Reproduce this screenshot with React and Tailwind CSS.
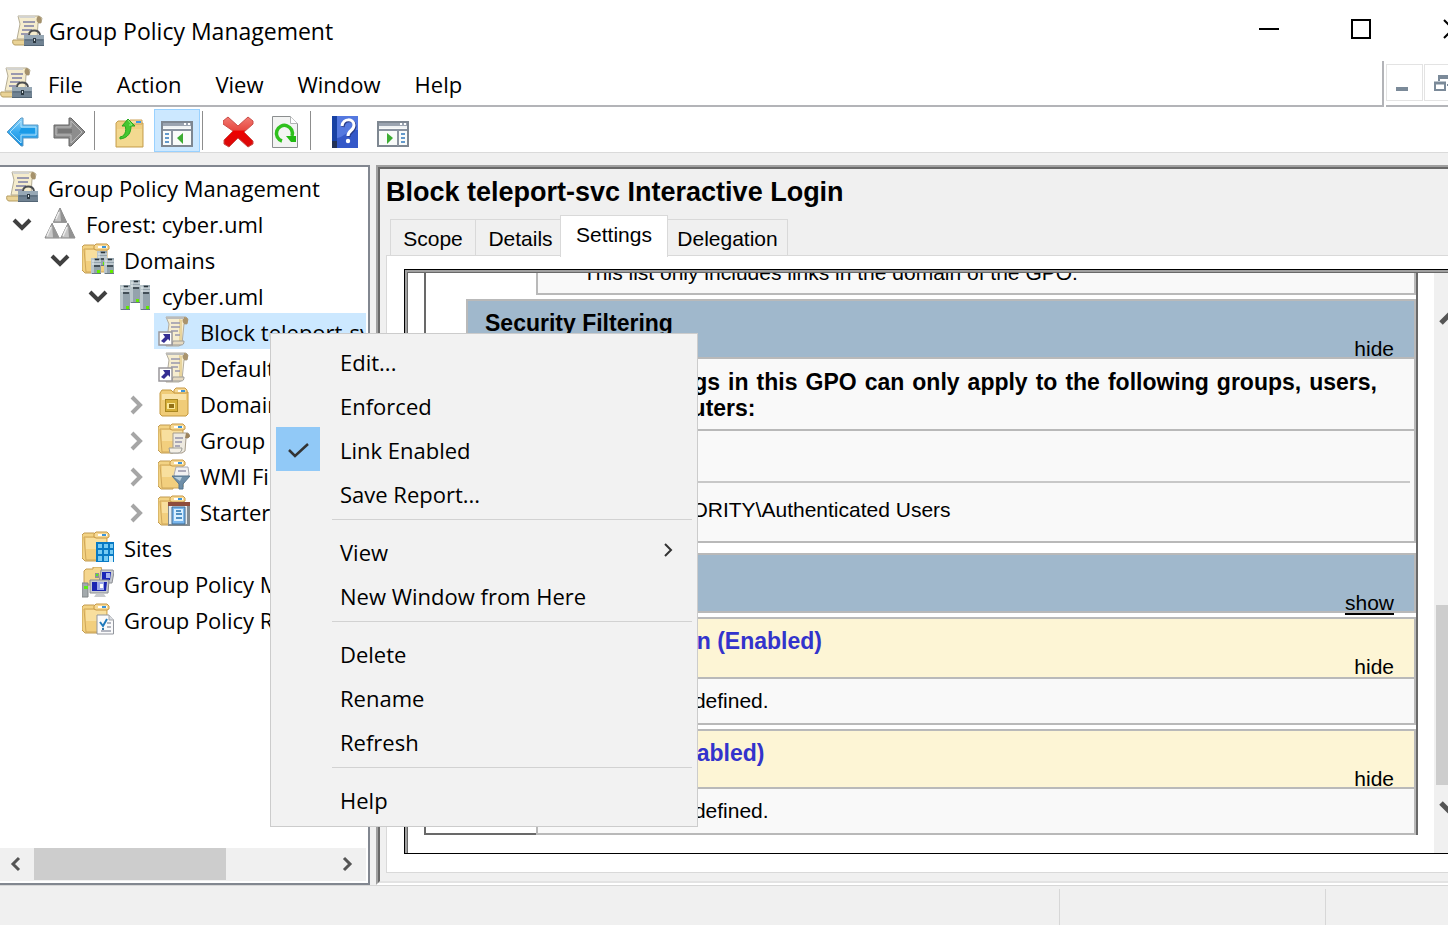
import React from "react";

const Svg = ({ children, className = "w-8 h-8" }) => (
  <svg viewBox="0 0 32 32" className={"shrink-0 " + className} aria-hidden="true">
    {children}
  </svg>
);

const ConsoleIcon = () => (
  <Svg>
    <path d="M6 1h21l3 2-1 5h-3l-1 16H5L8 9z" fill="#f5eccd" stroke="#b5ad95" />
    <path d="M26 1c3 0 4 3 3 7h-3c-2-2-2-5 0-7z" fill="#a5916b" />
    <path d="M6 1h17v2H8z" fill="#d3d3d0" />
    <path d="M11 7h12M12 11h10M10 15h10M9 19h7" stroke="#9a99ae" strokeWidth="1.8" />
    <path d="M1 25h15v5H3c-2 0-3-3-2-5z" fill="#ead396" stroke="#b59d63" />
    <path d="M17 20c0-6 10-6 11 0" fill="none" stroke="#4a4d50" strokeWidth="2" />
    <path d="M12 20h20v11H12z" fill="#708292" />
    <path d="M12 20h20v4H12z" fill="#97a8b5" />
    <path d="M13 25h18M12 30.5h20" stroke="#536575" />
    <path d="M21 23h3v5h-3z" fill="#2d3942" />
    <path d="M22 24h1v2h-1z" fill="#dce4e8" />
  </Svg>
);

const ForestIcon = () => (
  <Svg>
    <path d="M16 1 22.500 15h-13z" fill="#c4c4c4" stroke="#858585" />
    <path d="M16 1 22.500 15H17z" fill="#929292" />
    <path d="M8 16.500 15 31H1z" fill="#c9c9c9" stroke="#858585" />
    <path d="M8 16.500 15 31H9z" fill="#969696" />
    <path d="M24 16.500 31 31H17z" fill="#c6c6c6" stroke="#858585" />
    <path d="M24 16.500 31 31h-6z" fill="#929292" />
    <path d="M9.500 15.500h13L24 17l-7 14h-2L8 17z" fill="none" stroke="#9a9a9a" />
    <path d="M15 5 12 12M7 20 3 29M23 20l-4 9" stroke="#ededed" strokeWidth="1.5" />
  </Svg>
);

const FolderShape = () => (
  <>
    <path d="M0 4 2 2h10l3 2v26H3l-3-3z" fill="#f3d384" stroke="#c29b51" />
    <path d="M2 6h23v22l-3 1H4z" fill="#f2cf7e" stroke="#cfa75a" />
    <path d="M4 7h20v11H4z" fill="#f8df9e" />
    <path d="M12 3l2-2h11l2 2v3l-2 1H14l-2-1z" fill="#f6d995" stroke="#c79845" />
    <path d="M16 3h9v2h-9z" fill="#fff" />
    <path d="M20 3h4v2h-4z" fill="#3e95d9" />
  </>
);

const Server = ({ x, y, h }) => (
  <g>
    <rect x={x} y={y} width="10" height={h} fill="#94a3ac" />
    <path d={`M${x} ${y}h3v${h}h-3z`} fill="#bac6cb" />
    <path d={`M${x + 1} ${y + 3}h9M${x + 1} ${y + 6}h9`} stroke="#e8eff1" strokeWidth="1.2" />
    <path d={`M${x + 4} ${y + 1.5}h4M${x + 3} ${y + 8}h6`} stroke="#29343b" strokeWidth="1.3" />
    <rect x={x + 6} y={y + h - 4} width="3" height="3" fill="#62ea00" />
    <path d={`M${x + 1} ${y + h - 0.5}h9`} stroke="#687983" />
  </g>
);

const DomainsIcon = () => (
  <Svg>
    <FolderShape />
    <Server x={15} y={8} h={15} />
    <Server x={9} y={15} h={16} />
    <Server x={22} y={15} h={16} />
  </Svg>
);

const DomainIcon = () => (
  <Svg>
    <Server x={10} y={1} h={23} />
    <Server x={0} y={6} h={25} />
    <Server x={20} y={6} h={25} />
  </Svg>
);

const GpoLinkIcon = () => (
  <Svg>
    <path d="M8 2h20l2 2-1 5h-3l-2 20-3 2H8l3-22z" fill="#f6edcf" stroke="#b1ab9e" />
    <path d="M24 5v24l-3 1V4z" fill="#e8d49c" />
    <path d="M26 2c4 0 5 3 3 7h-3c-2-2-2-5 0-7z" fill="#aa946d" />
    <path d="M8 2h18v2H9z" fill="#bcbcba" />
    <path d="M13 8h9M13 12h9M13 16h7M17 20h5" stroke="#9897ad" strokeWidth="1.7" />
    <path d="M15 26h11c0 3-1 4-3 4h-9z" fill="#e6dac1" stroke="#9c9c99" />
    <rect x="1" y="17" width="13" height="13" fill="#fff" stroke="#99979b" strokeWidth="1.5" />
    <path d="M5 19h7v7l-2-2-4 4-3-2 4-4z" fill="#342e93" />
  </Svg>
);

const OuIcon = () => (
  <Svg>
    <path d="M2 6 4 3h9l2 2h15v22l-2 2H4l-2-2z" fill="#f0cc78" stroke="#c4983f" />
    <path d="M4 7h24v6H4z" fill="#f9e3a9" />
    <path d="M16 3l2-2h9l2 2v3H16z" fill="#f6d995" stroke="#c79845" />
    <path d="M20 3h4v2h-4z" fill="#fff" />
    <path d="M23 3h4v2h-4z" fill="#3e95d9" />
    <path d="M7 12h13v13H7z" fill="#a98722" />
    <path d="M8 13h11v11H8z" fill="#d5ae39" />
    <path d="M9 16h8v6H9z" fill="#fbe898" />
    <path d="M11 17h5v4h-5z" fill="#927016" />
  </Svg>
);

const GpoFolderIcon = () => (
  <Svg>
    <FolderShape />
    <path d="M15 10h15l2 3-2 2h-2l-1 13-3 2H13l2-5z" fill="#eeeae0" stroke="#a69c8c" />
    <path d="M28 10c4 0 5 4 2 5h-3z" fill="#9d835c" />
    <path d="M17 15h8M17 19h7M17 23h5" stroke="#9493a8" strokeWidth="1.5" />
    <path d="M11 25h13c0 3-2 5-4 5h-8z" fill="#f3efe5" stroke="#9d9d98" />
  </Svg>
);

const WmiIcon = () => (
  <Svg>
    <FolderShape />
    <path d="M18 8h12l1 7-2 4H18l-2-3z" fill="#f1f1f2" stroke="#aaaab0" />
    <path d="M20 12h8" stroke="#9493a8" strokeWidth="1.5" />
    <path d="M14 17h18l-7 8v5h-4v-5z" fill="#6f8fa9" stroke="#55758e" />
    <path d="M16 18h8l-2 4z" fill="#b9cfdd" />
  </Svg>
);

const StarterIcon = () => (
  <Svg>
    <FolderShape />
    <path d="M10 8h22v23H10z" fill="#848c91" />
    <path d="M10 7h22v4H10z" fill="#8e4d3c" />
    <path d="M11 11h18v18H11z" fill="#e7edf1" />
    <path d="M14 12h13v17H14z" fill="#79b6ed" stroke="#416c93" />
    <path d="M16 14h9v12h-9z" fill="#daf0ff" />
    <path d="M18 16h5M18 19h6M18 23h6" stroke="#2470af" strokeWidth="1.5" />
  </Svg>
);

const SitesIcon = () => (
  <Svg>
    <FolderShape />
    <path d="M14 11h18v20H14z" fill="#087ac5" />
    <path d="M16 13h4v4h-4zm6 0h4v4h-4zm6 0h3v4h-3zM16 19h4v4h-4zm6 0h4v4h-4zm6 0h3v4h-3zM16 25h4v5h-4zm6 0h4v5h-4z" fill="#76cbf3" />
    <path d="M27 25h4v6h-4z" fill="#d7f1fb" />
  </Svg>
);

const ModelingIcon = () => (
  <Svg>
    <path d="M2 4 4 2h7V0h8l1 4v14H2z" fill="#f5d68e" stroke="#c69d50" />
    <path d="M19 3h12l1 2-2 11H17z" fill="#c6c9ce" stroke="#8c8f94" />
    <path d="M20 5h9l-1 8h-8z" fill="#1926b8" />
    <path d="M24 6h4v5h-4z" fill="#a7b3ef" />
    <path d="M13 6h4v5h-4z" fill="#8e9398" />
    <path d="M14 7h2v2h-2z" fill="#5bed16" />
    <path d="M8 13h19l-1 13H8z" fill="#c7cbd0" stroke="#898c91" />
    <path d="M10 15h15l-1 9H10z" fill="#1a24b1" />
    <path d="M15 15h7v8h-7z" fill="#9ba7e8" />
    <path d="M18 17h3v4h-3z" fill="#fff" />
    <path d="M14 27h8l2 3H12z" fill="#c8cacc" />
    <path d="M0 16h6v14H0z" fill="#a3a9ac" stroke="#818688" />
    <path d="M2 19h4v3H2z" fill="#5bed16" />
  </Svg>
);

const ResultsIcon = () => (
  <Svg>
    <FolderShape />
    <path d="M15 12h12l4.500 5v14H15z" fill="#fafafb" stroke="#92969d" />
    <path d="M27 12v5h5" fill="#d9dce0" stroke="#a6a8ac" />
    <path d="M25 20h4M25 24h4M19 28h10" stroke="#9b9fac" strokeWidth="1.5" />
    <path d="m18 19 3 4 4-7" fill="none" stroke="#1f79bc" strokeWidth="2" />
    <path d="M20 25h2v2h-2z" fill="#3579a9" />
  </Svg>
);

const BackIcon = () => (
  <Svg>
    <defs>
      <linearGradient id="backFill" x1="0" y1="0" x2="0" y2="1">
        <stop offset="0" stopColor="#90d4fa" />
        <stop offset=".5" stopColor="#36aaf0" />
        <stop offset="1" stopColor="#168ddd" />
      </linearGradient>
    </defs>
    <path d="M0 16 14 2h2v7h15v13H16v8h-2z" fill="url(#backFill)" stroke="#5c9ac5" />
    <path d="M3 16 14 5v6h15v8H14v8z" fill="none" stroke="#b1e3fc" />
    <path d="M14 12h14v5H12z" fill="#199be8" />
  </Svg>
);

const ForwardIcon = () => (
  <Svg>
    <path d="M32 16 18 2h-2v7H1v13h15v8h2z" fill="#8d8d8d" stroke="#676767" />
    <path d="M29 16 18 5v6H3v8h15v8z" fill="none" stroke="#bcbcbc" />
    <path d="M5 13h14v4H5z" fill="#777" />
  </Svg>
);

const UpIcon = () => (
  <Svg>
    <path d="M1 7 3 5h10l2 2h13v24H1z" fill="#f0cf83" stroke="#c5a050" />
    <path d="M2 13h25v17H2z" fill="#f3d990" />
    <path d="M15 4h12v4H15z" fill="#f7dda1" stroke="#cda258" />
    <path d="M21 5h5v2h-5z" fill="#3d98e5" />
    <path d="M5 21c7-1 6-10 5-11H7l6-7 7 7h-4c0 7-3 12-11 13z" fill="#46c630" stroke="#24a81c" />
    <path d="m13 4 4 5h-3" fill="none" stroke="#92f377" />
  </Svg>
);

const WindowIcon = ({ flip }) => (
  <Svg>
    <rect x="1" y="6" width="30" height="24" fill="#f9fbfa" stroke="#7e8791" strokeWidth="2" />
    <path d="M2 7h28v3H2z" fill="#9ba4b0" />
    <path d="M23 8h2M27 8h2" stroke="#fff" strokeWidth="2" />
    <path d="M2 11h28" stroke="#e7ebef" />
    <path d="M2 13h28v2H2z" fill="#8a93a0" />
    <g transform={flip ? "translate(32 0) scale(-1 1)" : undefined}>
      <path d="M11 15v15" stroke="#8b949f" strokeWidth="2" />
      <path d="M4 18h4M4 22h4M4 26h4" stroke="#327abc" strokeWidth="1.6" />
      <path d="m22 17-6 5 6 6z" fill="#3cac32" />
    </g>
  </Svg>
);

const DeleteIcon = () => (
  <Svg>
    <defs>
      <linearGradient id="deleteFill" x1="0" y1="0" x2="0" y2="1">
        <stop offset="0" stopColor="#f17a72" />
        <stop offset=".42" stopColor="#e84b43" />
        <stop offset=".48" stopColor="#ee0000" />
        <stop offset="1" stopColor="#d80b0b" />
      </linearGradient>
    </defs>
    <path d="M5 1 15 10 25 1l5 4v3l-9 8 9 9v3l-5 3-10-9-9 9-5-3v-4l9-9L0 8V5z" fill="url(#deleteFill)" stroke="#ca4d48" />
  </Svg>
);

const RefreshIcon = () => (
  <Svg>
    <path d="M3.500 .5h18l7 7v24h-25z" fill="#f3f4f3" stroke="#8b8e8f" />
    <path d="M21.500 .5v7h7" fill="#fff" stroke="#b0b3b4" />
    <path d="M13 25a8 8 0 1 1 10-5" fill="none" stroke="#2fc11d" strokeWidth="3.500" />
    <path d="M17 20h10v6h-5z" fill="#21b912" />
  </Svg>
);

const HelpIcon = () => (
  <Svg>
    <path d="M1 0h26v32H1z" fill="#3458c8" />
    <path d="M1 0h5v32H1z" fill="#1841a3" />
    <path d="M1 25h5v7H1z" fill="#233258" />
    <path d="M6 0h21v14C18 13 13 21 6 22z" fill="#5478df" />
    <path d="M11 10c1-8 12-8 12-1 0 6-6 5-6 11" fill="none" stroke="#273a88" strokeWidth="3" transform="translate(1 1)" />
    <path d="M11 10c1-8 12-8 12-1 0 6-6 5-6 11" fill="none" stroke="#fff" strokeWidth="3" />
    <circle cx="17" cy="25" r="2.200" fill="#fff" />
  </Svg>
);

const Expander = ({ open }) => (
  <Svg>
    {open ? (
      <path d="m8 13 8 8 8-8" fill="none" stroke="#404040" strokeWidth="4" />
    ) : (
      <path d="m12 10 8 8-8 8" fill="none" stroke="#a6a6a6" strokeWidth="4" />
    )}
  </Svg>
);

const tree = [
  { label: "Group Policy Management", icon: ConsoleIcon, pad: "pl-[6px]" },
  { label: "Forest: cyber.uml", icon: ForestIcon, pad: "pl-[6px]", open: true },
  { label: "Domains", icon: DomainsIcon, pad: "pl-[44px]", open: true },
  { label: "cyber.uml", icon: DomainIcon, pad: "pl-[82px]", open: true },
  { label: "Block teleport-svc Interactive Login", icon: GpoLinkIcon, pad: "pl-[154px]", leaf: true, selected: true },
  { label: "Default Domain Policy", icon: GpoLinkIcon, pad: "pl-[154px]", leaf: true },
  { label: "Domain Controllers", icon: OuIcon, pad: "pl-[120px]", open: false },
  { label: "Group Policy Objects", icon: GpoFolderIcon, pad: "pl-[120px]", open: false },
  { label: "WMI Filters", icon: WmiIcon, pad: "pl-[120px]", open: false },
  { label: "Starter GPOs", icon: StarterIcon, pad: "pl-[120px]", open: false },
  { label: "Sites", icon: SitesIcon, pad: "pl-[82px]" },
  { label: "Group Policy Modeling", icon: ModelingIcon, pad: "pl-[82px]" },
  { label: "Group Policy Results", icon: ResultsIcon, pad: "pl-[82px]" },
];

const TreeRow = ({ label, icon: Icon, pad, open, leaf, selected }) => (
  <li className={"flex h-9 " + pad}>
    {open !== undefined && (
      <button aria-label={(open ? "Collapse " : "Expand ") + label} className="mr-[6px] flex shrink-0 items-center">
        <Expander open={open} />
      </button>
    )}
    <button
      className={
        "flex items-center gap-[10px] whitespace-nowrap " +
        (leaf ? "grow pl-1 " : "") +
        (selected ? "bg-[#cce8ff]" : "")
      }
    >
      <Icon />
      <span className="pt-0.5">{label}</span>
    </button>
  </li>
);

const Tool = ({ label, active, children }) => (
  <button
    aria-label={label}
    aria-pressed={active}
    className={
      "flex w-[46px] shrink-0 items-center justify-center border pt-0.5 " +
      (active ? "border-[#99d1ff] bg-[#cce8ff]" : "border-transparent")
    }
  >
    {children}
  </button>
);

const ToolSeparator = () => <div className="my-0.5 ml-0.5 mr-[13px] w-px shrink-0 bg-[#8d8d8d]" />;

const MenuItem = ({ label, checked, submenu }) => (
  <button role="menuitem" className="flex h-11 w-full items-center pl-[5px] text-left">
    <span className={"flex h-11 w-11 items-center justify-center " + (checked ? "bg-[#91c9f7]" : "")}>
      {checked && (
        <Svg className="h-8 w-8">
          <path d="m7 17 6 6L26 11" fill="none" stroke="#333" strokeWidth="2.500" />
        </Svg>
      )}
    </span>
    <span className="grow pl-5 pt-0.5">{label}</span>
    {submenu && (
      <Svg className="mr-3 h-8 w-8">
        <path d="m12 9 6 6-6 6" fill="none" stroke="#333" strokeWidth="2" />
      </Svg>
    )}
  </button>
);

const MenuSeparator = () => <div role="separator" className="mb-[9px] ml-[61px] mr-[5px] mt-1 h-px bg-[#d2d2d2]" />;

const SectionHead = ({ title, action, tone }) => (
  <div className={"flex items-end justify-between border-2 border-[#b9b9b9] pr-5 pl-[17px] " + tone}>
    <h3 className="self-start pt-[9px] text-[23px] leading-[26px] font-bold">{title}</h3>
    <button className={"leading-4 " + (action === "show" ? "underline decoration-2 underline-offset-[3px]" : "")}>
      {action}
    </button>
  </div>
);

const blue = "h-[60px] ml-[40px] bg-[#a0b8cc]";

const tabs = [
  { label: "Scope", box: "w-[86px]" },
  { label: "Details", box: "w-[87px] pl-1" },
  { label: "Settings", box: "w-[108px]", active: true },
  { label: "Delegation", box: "w-[121px]" },
];

export default function App() {
  return (
    <div className="relative flex h-screen min-h-[925px] w-full flex-col overflow-hidden bg-[#f0f0f0] font-['Open_Sans','Noto_Sans',sans-serif] text-[22px] leading-8 text-black">
      <header className="flex h-[61px] shrink-0 items-center bg-white">
        <div className="flex items-center gap-[5px] pl-3">
          <ConsoleIcon />
          <h1 className="text-[23px]">Group Policy Management</h1>
        </div>
        <div className="-mr-[51px] ml-auto flex h-[60px] self-start">
          <button aria-label="Minimize" className="flex w-[92px] items-center justify-center">
            <Svg><path d="M6 14h20v2H6z" /></Svg>
          </button>
          <button aria-label="Maximize" className="flex w-[92px] items-center justify-center">
            <Svg><rect x="7" y="6" width="18" height="18" fill="none" stroke="#000" strokeWidth="2" /></Svg>
          </button>
          <button aria-label="Close" className="flex w-[92px] items-center justify-center">
            <Svg><path d="m7 6 18 18M25 6 7 24" stroke="#000" strokeWidth="2" /></Svg>
          </button>
        </div>
      </header>

      <div className="flex h-[46px] shrink-0 gap-0.5 bg-white">
        <nav className="flex grow items-center border-b-2 border-r-2 border-[#b3b4b8]">
          <ConsoleIcon />
          <div className="flex gap-[34px] pl-4 pt-0.5">
            {["File", "Action", "View", "Window", "Help"].map((m) => (
              <button key={m}>{m}</button>
            ))}
          </div>
        </nav>
        <div className="-mr-[13px] flex shrink-0 items-start gap-px border-b-2 border-[#b3b4b8] pt-[3px]">
          <button aria-label="Minimize child window" className="h-[37px] w-[37px] border border-[#e3e3e3]">
            <svg viewBox="0 0 35 35" className="h-full w-full"><path d="M9 22h12v4H9z" fill="#7b8a99" /></svg>
          </button>
          <button aria-label="Restore child window" className="h-[37px] w-[37px] border border-[#e3e3e3]">
            <svg viewBox="0 0 35 35" className="h-full w-full" fill="none" stroke="#7b8a99">
              <path d="M14 16v-5h13v9h-5" strokeWidth="2" />
              <path d="M13 12h15" strokeWidth="4" />
              <path d="M10 18h10v7H10z" strokeWidth="2" />
              <path d="M9 18h12" strokeWidth="3" />
            </svg>
          </button>
        </div>
      </div>

      <div className="flex h-[46px] shrink-0 border-b border-[#dadada] bg-white pt-0.5">
        <Tool label="Back"><BackIcon /></Tool>
        <Tool label="Forward"><ForwardIcon /></Tool>
        <ToolSeparator />
        <Tool label="Up one level"><UpIcon /></Tool>
        <Tool label="Show or hide console tree" active><WindowIcon /></Tool>
        <ToolSeparator />
        <Tool label="Delete"><DeleteIcon /></Tool>
        <Tool label="Refresh"><RefreshIcon /></Tool>
        <ToolSeparator />
        <Tool label="Help"><HelpIcon /></Tool>
        <Tool label="Show or hide action pane"><WindowIcon flip /></Tool>
      </div>

      <div className="mt-3 flex min-h-0 grow gap-[6px]">
        <aside className="flex w-[370px] shrink-0 flex-col border-b-2 border-r-2 border-t-2 border-[#828790] bg-white pb-0.5 pr-0.5">
          <ul className="min-h-0 grow overflow-hidden pt-0.5">
            {tree.map((row) => (
              <TreeRow key={row.label} {...row} />
            ))}
          </ul>
          <div className="flex h-[33px] shrink-0 items-start bg-[#f0f0f0]">
            <button aria-label="Scroll left" className="h-8 w-[34px]">
              <Svg><path d="m19 10-6 6 6 6" fill="none" stroke="#555" strokeWidth="3" /></Svg>
            </button>
            <div className="h-8 w-48 bg-[#cdcdcd]" />
            <button aria-label="Scroll right" className="ml-auto h-8 w-[34px]">
              <Svg><path d="m12 10 6 6-6 6" fill="none" stroke="#555" strokeWidth="3" /></Svg>
            </button>
          </div>
        </aside>

        <main className="-mr-5 flex min-w-0 grow flex-col border-b-2 border-l-2 border-t-2 border-b-white border-l-[#a0a0a0] border-t-[#a0a0a0] font-['Liberation_Sans',Arial,sans-serif] text-[21px]">
          <div className="flex min-h-0 grow flex-col border-b-2 border-l-2 border-t-2 border-b-[#e3e3e3] border-l-[#696969] border-t-[#696969] pb-2 pl-[6px]">
            <h2 className="pt-[7px] text-[27px] leading-8 font-bold">Block teleport-svc Interactive Login</h2>
            <div role="tablist" className="flex h-[47px] shrink-0 items-end pl-1">
              {tabs.map((t) => (
                <button
                  key={t.label}
                  role="tab"
                  aria-selected={!!t.active}
                  className={
                    "border border-[#d9d9d9] " +
                    t.box +
                    (t.active
                      ? " relative z-10 -mx-px -mb-[2px] h-[42px] border-b-0 bg-white pb-1"
                      : " -mr-px h-9 border-b-0 pt-0.5")
                  }
                >
                  {t.label}
                </button>
              ))}
            </div>

            <div className="flex min-h-0 grow flex-col border-b border-l border-t border-[#d9d9d9] bg-white pb-[18px] pl-[17px] pt-[13px]">
              <div className="flex min-h-0 grow border-b border-l border-t border-black">
                <div className="flex min-w-0 grow border-l-2 border-t-2 border-[#a0a0a0]">
                  <div className="flex min-w-0 grow overflow-hidden border-l border-t border-[#696969]">
                    <div className="min-w-0 grow px-4">
                      <div className="border-2 border-t-0 border-[#696969]">
                        <div className="ml-[110px] flex h-[22px] flex-col justify-end overflow-hidden border-2 border-t-0 border-[#b9b9b9] bg-[#f9f9f9] pb-[7px] pl-[45px] leading-[26px]">
                          <p>This list only includes links in the domain of the GPO.</p>
                        </div>

                        <div className="mt-1">
                          <SectionHead title="Security Filtering" action="hide" tone={blue} />
                        </div>
                        <div className="ml-[110px] border-2 border-t-0 border-[#b9b9b9] bg-[#f9f9f9] leading-[26px]">
                          <p className="border-b-2 border-[#b9b9b9] pb-2 pl-[45px] pr-[37px] pt-[10px] text-justify text-[23px] font-bold">
                            The settings in this GPO can only apply to the following groups, users, and computers:
                          </p>
                          <div className="pr-1">
                            <table className="w-full">
                              <thead>
                                <tr className="h-[51px] border-b-2 border-[#c8c8c8]">
                                  <th className="pl-[55px] text-left">Name</th>
                                </tr>
                              </thead>
                              <tbody>
                                <tr>
                                  <td className="pb-[18px] pl-[64px] pt-[14px]">NT AUTHORITY\Authenticated Users</td>
                                </tr>
                              </tbody>
                            </table>
                          </div>
                        </div>

                        <div className="mt-[10px]">
                          <SectionHead title="Delegation" action="show" tone={blue} />
                        </div>

                        <div className="mt-1">
                          <SectionHead
                            title="Computer Configuration (Enabled)"
                            action="hide"
                            tone="h-[62px] bg-[#fdf5d5] pb-0.5 text-[#3333cc] [&>button]:text-black"
                          />
                        </div>
                        <p className="ml-[110px] border-2 border-t-0 border-[#b9b9b9] bg-[#f9f9f9] py-[9px] pl-[45px] leading-[26px]">
                          No settings defined.
                        </p>

                        <div className="mt-1">
                          <SectionHead
                            title="User Configuration (Enabled)"
                            action="hide"
                            tone="h-[60px] bg-[#fdf5d5] text-[#3333cc] [&>button]:text-black"
                          />
                        </div>
                        <p className="-mb-0.5 ml-[110px] border-2 border-t-0 border-[#b9b9b9] bg-[#f9f9f9] py-[9px] pl-[45px] leading-[26px]">
                          No settings defined.
                        </p>
                      </div>
                    </div>
                    <div className="flex w-[34px] shrink-0 flex-col items-center bg-[#f0f0f0] pb-7 pt-7">
                      <button aria-label="Scroll up">
                        <Svg><path d="m6 22 10-10 10 10" fill="none" stroke="#555" strokeWidth="5" /></Svg>
                      </button>
                      <div className="mt-auto h-[180px] w-[30px] bg-[#cdcdcd]" />
                      <button aria-label="Scroll down" className="mt-2">
                        <Svg><path d="m6 10 10 10 10-10" fill="none" stroke="#555" strokeWidth="5" /></Svg>
                      </button>
                    </div>
                  </div>
                </div>
              </div>
            </div>
          </div>
        </main>
      </div>

      <footer className="flex h-10 shrink-0 justify-end border-t border-[#d7d7d7] pt-[3px]">
        <div className="w-[266px] border-l border-[#d7d7d7]" />
        <div className="w-[123px] border-l border-[#d7d7d7]" />
      </footer>

      <div
        role="menu"
        aria-label="Group policy link"
        className="absolute left-[270px] top-[333px] z-20 w-[428px] border border-[#cccccc] bg-[#f2f2f2] py-[5px]"
      >
        <MenuItem label="Edit..." />
        <MenuItem label="Enforced" />
        <MenuItem label="Link Enabled" checked />
        <MenuItem label="Save Report..." />
        <MenuSeparator />
        <MenuItem label="View" submenu />
        <MenuItem label="New Window from Here" />
        <MenuSeparator />
        <MenuItem label="Delete" />
        <MenuItem label="Rename" />
        <MenuItem label="Refresh" />
        <MenuSeparator />
        <MenuItem label="Help" />
      </div>
    </div>
  );
}
